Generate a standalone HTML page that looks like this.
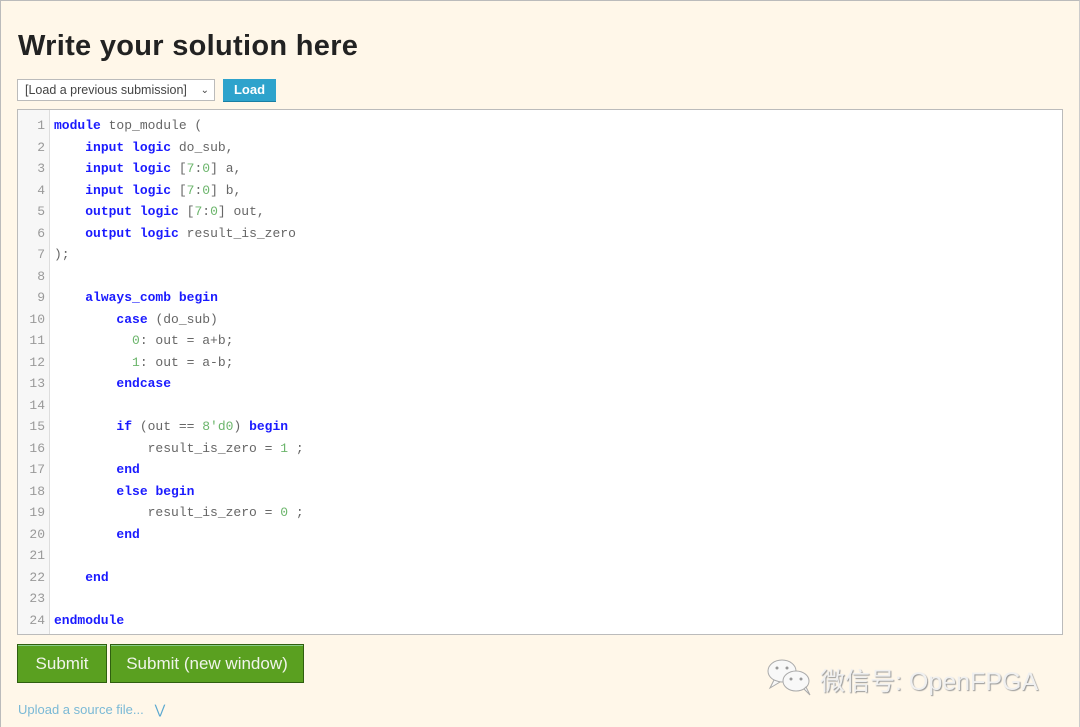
<!DOCTYPE html>
<html><head><meta charset="utf-8"><style>
body{margin:0;width:1080px;height:726px;overflow:hidden;background:#fff7e9;font-family:"Liberation Sans",sans-serif;}
.page{position:absolute;left:0;top:0;width:1078px;height:726px;border-left:1px solid #bbb;border-top:1px solid #bbb;border-right:1px solid #ccc;}
h1{position:absolute;left:17px;top:29px;margin:0;font-size:29px;font-weight:bold;color:#222;letter-spacing:0.3px}
.sel{position:absolute;left:16px;top:78px;width:198px;height:22px;background:#fff;border:1px solid #bbb;font-size:12.5px;color:#444;line-height:21px;padding-left:7px;box-sizing:border-box}
.sel span{position:absolute;right:5px;top:0;font-size:10px}
.load{position:absolute;left:222px;top:78px;width:53px;height:22px;background:#2ea3cc;color:#fff;font-weight:bold;font-size:13px;text-align:center;line-height:21px;border-bottom:1px solid #1a7fa3}
.ed{position:absolute;left:16px;top:108px;width:1044px;height:524px;background:#fff;border:1px solid #bbb;}
.gut{position:absolute;left:0;top:0;width:31px;height:100%;background:#f7f7f7;border-right:1px solid #ddd}
pre{margin:0;position:absolute;top:5px;font-family:"Liberation Mono",monospace;font-size:13px;line-height:21.52px;}
.ln{left:0;width:27px;text-align:right;color:#999}
.code{left:36px;color:#666}
.k{color:#1a1aff;font-weight:bold}.n{color:#6bb56b}
.btn{position:absolute;top:643px;height:39px;background:#5aa020;border:1px solid #2f5f0f;color:#f0f4ea;font-size:17px;line-height:38px;text-align:center;box-sizing:border-box;box-shadow:inset 0 1px 0 #8c8}
.up{position:absolute;left:17px;top:701px;font-size:13px;color:#7ab9d6}
.wx{position:absolute;left:819px;top:661px;font-size:25px;color:#f0f0f0;text-shadow:1px 1px 1px #999;font-family:"Liberation Sans","Noto Sans CJK SC",sans-serif}
</style></head><body><div class="page">
<h1>Write your solution here</h1>
<div class="sel">[Load a previous submission]<span>&#8964;</span></div>
<div class="load">Load</div>
<div class="ed"><div class="gut"></div>
<pre class="ln">1
2
3
4
5
6
7
8
9
10
11
12
13
14
15
16
17
18
19
20
21
22
23
24</pre>
<pre class="code"><span class="k">module</span> top_module (
    <span class="k">input</span> <span class="k">logic</span> do_sub,
    <span class="k">input</span> <span class="k">logic</span> [<span class="n">7</span>:<span class="n">0</span>] a,
    <span class="k">input</span> <span class="k">logic</span> [<span class="n">7</span>:<span class="n">0</span>] b,
    <span class="k">output</span> <span class="k">logic</span> [<span class="n">7</span>:<span class="n">0</span>] out,
    <span class="k">output</span> <span class="k">logic</span> result_is_zero
);

    <span class="k">always_comb</span> <span class="k">begin</span>
        <span class="k">case</span> (do_sub)
          <span class="n">0</span>: out = a+b;
          <span class="n">1</span>: out = a-b;
        <span class="k">endcase</span>

        <span class="k">if</span> (out == <span class="n">8'd0</span>) <span class="k">begin</span>
            result_is_zero = <span class="n">1</span> ;
        <span class="k">end</span>
        <span class="k">else</span> <span class="k">begin</span>
            result_is_zero = <span class="n">0</span> ;
        <span class="k">end</span>

    <span class="k">end</span>

<span class="k">endmodule</span></pre></div>
<div class="btn" style="left:16px;width:90px">Submit</div>
<div class="btn" style="left:109px;width:194px">Submit (new window)</div>
<div class="up">Upload a source file... &nbsp;&nbsp;<span style="color:#5aa8d0">&#8897;</span></div>
<svg style="position:absolute;left:765px;top:656px" width="48" height="40" viewBox="0 0 48 40"><g fill="#f8f8f8" stroke="#aaa" stroke-width="1"><ellipse cx="16" cy="14" rx="14" ry="11"/><path d="M8 23 L4 31 L14 25Z"/><ellipse cx="30" cy="24" rx="13" ry="10"/><path d="M38 32 L44 38 L40 30Z"/></g><g fill="#999"><circle cx="11" cy="11" r="1.5"/><circle cx="21" cy="11" r="1.5"/><circle cx="25" cy="22" r="1.5"/><circle cx="35" cy="22" r="1.5"/></g></svg>
<div class="wx">微信号: OpenFPGA</div>
</div></body></html>
